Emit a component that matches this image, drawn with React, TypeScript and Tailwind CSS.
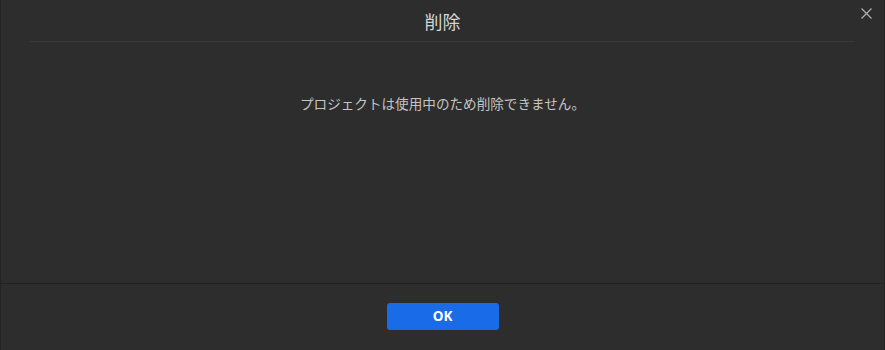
import React from "react";

export default function App() {
  return (
    <div
      className="w-[885px] h-[350px] bg-[#2d2d2d] border-x border-[#232323] flex flex-col relative overflow-hidden"
      style={{ fontFamily: '"Noto Sans CJK JP", "Noto Sans", sans-serif' }}
    >
      <div className="h-[42px] mx-[29px] border-b border-[#3a3a3a] flex items-center justify-center shrink-0">
        <span className="text-[18px] text-[#d4d4d4] leading-none">削除</span>
      </div>
      <button className="absolute right-[11px] top-[6px] w-[14px] h-[14px] flex items-center justify-center text-[#b0b0b0]">
        <svg width="13" height="13" viewBox="0 0 13 13" fill="none" stroke="currentColor" strokeWidth="1.2">
          <path d="M1.5 1.5 L11.5 11.5 M11.5 1.5 L1.5 11.5" />
        </svg>
      </button>
      <div className="h-[241px] flex justify-center pt-[51px] shrink-0">
        <span className="text-[13.6px] text-[#c4c4c4] leading-[20px]">
          プロジェクトは使用中のため削除できません。
        </span>
      </div>
      <div className="border-t border-[#232323] flex-1 flex justify-center pt-[19px]">
        <button
          className="w-[112px] h-[27px] rounded-[3px] bg-[#1a6be8] text-white text-[13.5px] font-bold flex items-center justify-center"
          style={{ fontFamily: '"Open Sans", "Noto Sans", sans-serif' }}
        >
          OK
        </button>
      </div>
    </div>
  );
}
